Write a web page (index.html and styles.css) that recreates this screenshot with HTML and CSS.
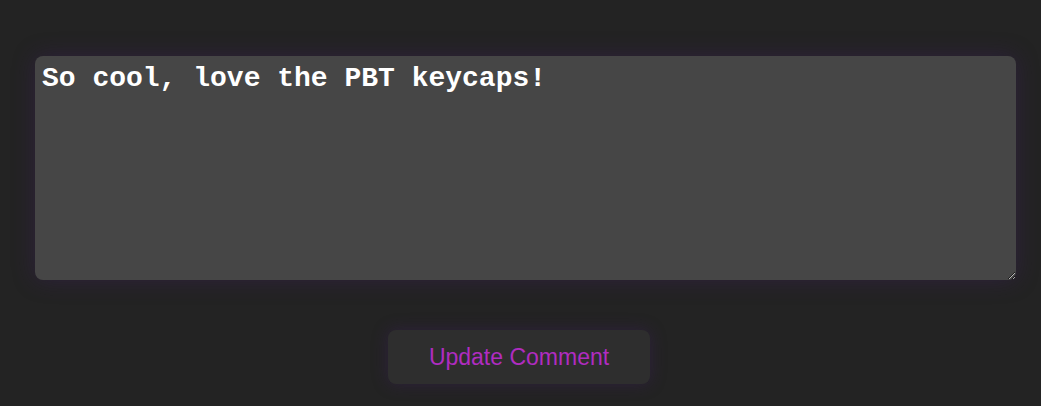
FILE: index.html
```html
<!DOCTYPE html>
<html>
<head>
<meta charset="utf-8">
<link rel="stylesheet" href="styles.css">
</head>
<body>
<main class="page">
  <textarea class="comment" autofocus>So cool, love the PBT keycaps!</textarea>
  <button class="update">Update Comment</button>
</main>
</body>
</html>
```
FILE: styles.css
```css
html, body {
  margin: 0;
  padding: 0;
  background: #232323;
  height: 100%;
}
.page {
  display: flex;
  flex-direction: column;
  align-items: flex-start;
  padding: 56px 0 0 35px;
}
.comment {
  box-sizing: border-box;
  width: 981px;
  height: 224px;
  margin: 0;
  padding: 6px 7px;
  border: none;
  border-radius: 8px;
  background: #464646;
  color: #ffffff;
  caret-color: #ffffff;
  font-family: "Liberation Mono", "Courier New", monospace;
  font-weight: bold;
  font-size: 28px;
  line-height: 34px;
  box-shadow: 0 0 22px rgba(60, 30, 90, 0.45);
  outline: none;
}
.update {
  align-self: flex-start;
  margin: 50px 0 0 353px;
  width: 262px;
  height: 54px;
  border: none;
  border-radius: 8px;
  background: #2e2e2e;
  color: #b02cc0;
  font-family: "Liberation Sans", Arial, sans-serif;
  font-size: 23px;
  box-shadow: 0 0 16px rgba(60, 30, 90, 0.45);
  cursor: pointer;
}
```
